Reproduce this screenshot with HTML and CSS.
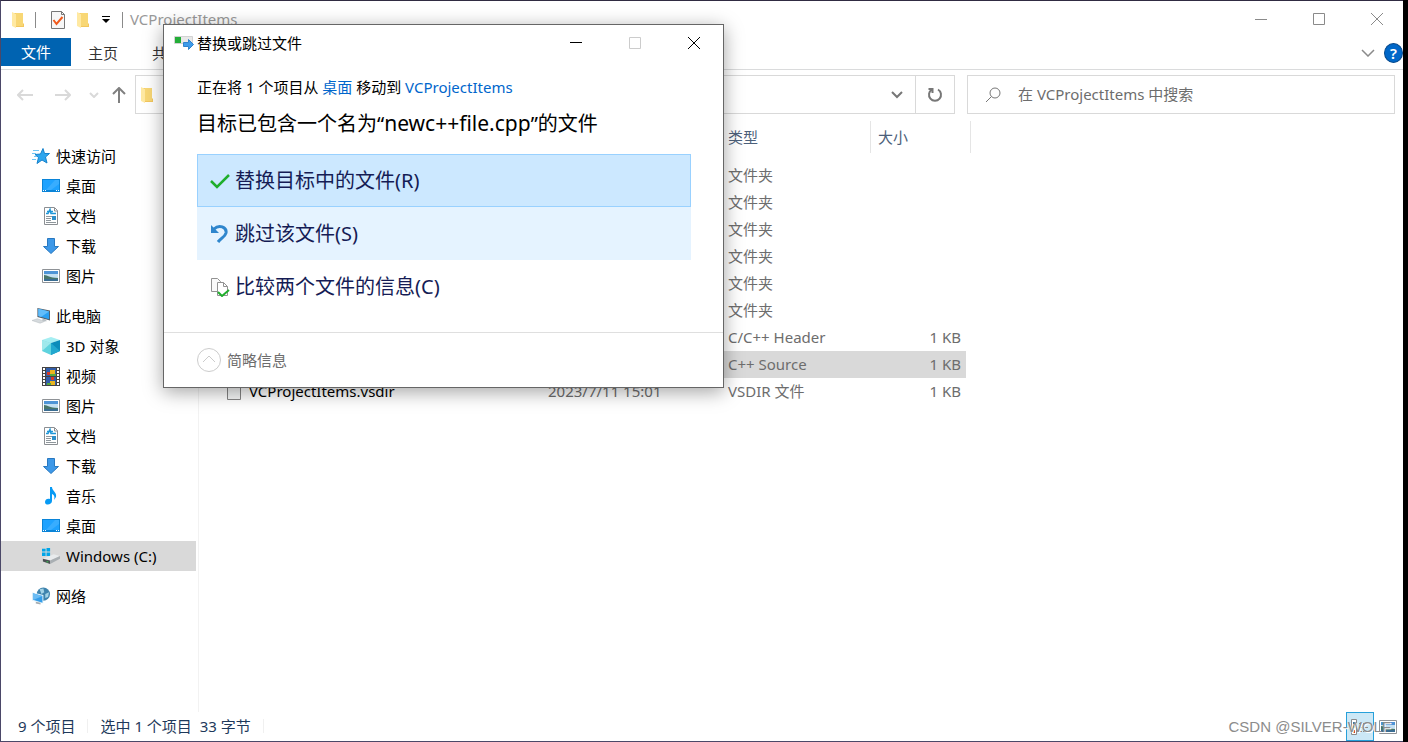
FILE: index.html
```html
<!DOCTYPE html>
<html lang="zh-CN">
<head>
<meta charset="utf-8">
<title>VCProjectItems</title>
<link rel="stylesheet" href="styles.css">
</head>
<body>
<svg class="sprite" aria-hidden="true">
  <symbol id="folder" viewBox="0 0 14 18"><path fill="#f3c75d" d="M3 2h9v10l1 1v3H3z"/><path fill="#f8d775" d="M5 2h7v13H5z"/><path fill="#ffe9a2" d="M1 1l4 2v14l-4-2z"/></symbol>
  <symbol id="desktop" viewBox="0 0 18 14"><path fill="#0a84d8" d="M0 0h18v13H0z"/><path fill="#1ea2ff" d="M1 1h16v10H1z"/><path fill="#38adff" d="M13 1h4v4l-8 6H4z"/><path fill="#fff" d="M1 11h1v1H1zM3 11h1v1H3zM14 11h1v1h-1zM16 11h1v1h-1z"/></symbol>
  <symbol id="doc" viewBox="0 0 16 18"><path fill="#fff" stroke="#8b8f93" d="M1.500.5h10l3 3v14h-13z"/><path fill="none" stroke="#8b8f93" d="M11.500 1v3h3"/><path fill="none" stroke="#1e96d8" stroke-width="1.500" d="M3 6.500h2l2-4 1 4h5M4 4.500h6"/><path stroke="#8f979c" d="M3 9.500h10M3 11.500h5M3 13.500h5M3 15.500h10"/><path fill="#2d8fc9" d="M9 9h4v4H9z"/></symbol>
  <symbol id="down" viewBox="0 0 18 18"><path fill="#3d98e8" stroke="#2878c0" d="M5.500 1.500h7v8h4L9 16.500 1.500 9.500h4z"/></symbol>
  <symbol id="picture" viewBox="0 0 18 14"><path fill="#fff" stroke="#8e9296" d="M.5.5h17v13H.5z"/><path fill="#4e94d6" d="M2 2h14v4H2z"/><path fill="#c4e0f2" d="M2 5h14v4H2z"/><path fill="#47766b" d="M2 6c4 0 5 3 14 3v1H2z"/><path fill="#3a6d92" d="M2 10h14v2H2z"/></symbol>
  <symbol id="star" viewBox="0 0 18 18"><path fill="#2fa6ee" stroke="#1682cc" d="M11 1.500l1.500 5h5l-4 3.500 1.500 6-5-3-5 3.500 1.500-6L3 7.500 8.500 7z"/><path stroke="#71c4f3" d="M1 3.500h6M0 6.500h4M2 9.500h3M0 12.500h4"/></symbol>
  <symbol id="pc" viewBox="0 0 20 18"><path fill="#55606a" d="M6 0l14 3v11L6 10z"/><path fill="#2ba0f2" d="M7 1l12 3v8.500L7 9z"/><path fill="#62bdfa" d="M7 1l12 3-9 6-3-1z"/><path fill="#b9c0c5" d="M12 12l4 1v2l-5-1z"/><path fill="#d5dadd" stroke="#aeb5ba" stroke-width=".5" d="M0 14l6-2 8 3-5 2z"/></symbol>
  <symbol id="cube" viewBox="0 0 18 18"><path fill="#a5eef2" d="M0 3l9-3 9 3-9 3z"/><path fill="#5fd3de" d="M0 3l9 3v12l-9-4z"/><path fill="#a0e9ec" d="M0 3l9 3-9 8z"/><path fill="#0c8cba" d="M18 3L9 6v12l9-4z"/><path fill="#22a8cf" d="M9 6l9 8-9 4z"/></symbol>
  <symbol id="video" viewBox="0 0 18 19"><path fill="#444" d="M0 0h18v19H0z"/><path fill="#335eaa" d="M4 1h10v8H4zM4 10h10v8H4z"/><path stroke="#fff" stroke-width="2" stroke-dasharray="2 1" d="M2 1v17M16 1v17"/><path fill="#e9b51f" d="M8 3h5v4H8zM8 14h5v4H8z"/><path fill="#d93a24" d="M5 5h3v3H5zM9 10h3v3H9z"/><path fill="#54a83e" d="M8 7h6v2H8zM5 16h4v2H5z"/></symbol>
  <symbol id="music" viewBox="0 0 18 18"><path fill="#079af4" d="M8 0h2c0 4 5 5 4 10l-2 3c1-4 0-5-2-6v7c0 4-7 5-7 1 0-3 3-4 5-3z"/></symbol>
  <symbol id="drive" viewBox="0 0 20 18"><path fill="#00a5e8" d="M0 1h4v3H0zM5 0h4v4H5zM0 5h4v4H0zM5 5h4v4H5z"/><path fill="#e8ebed" d="M1 12l12-5 7 2-11 5z"/><path fill="#4b5054" d="M1 12l8 2v4l-8-3z"/><path fill="#a9afb3" d="M9 14l11-5v3L9 18z"/><path fill="#38e051" d="M5 15h2v1H5z"/></symbol>
  <symbol id="network" viewBox="0 0 19 18"><circle cx="12" cy="7" r="7" fill="#3e83ad"/><path fill="#a2d2e6" d="M8 2l4-1 1 4-3 2zM14 7l4-2-1 5-3 1z"/><path fill="#e6f4fa" d="M0 5l12 3v9L0 14z"/><path fill="#349de9" d="M1 6l10 3v7L1 13z"/><path fill="#6bbcf4" d="M1 6l10 3-9 4H1z"/><path fill="#a4acb1" d="M4 15l5 1v2l-5-1z"/></symbol>
</svg>

<main class="explorer">
  <header class="titlebar">
    <svg class="qa-folder" width="14" height="18"><use href="#folder"/></svg>
    <span class="bar"></span>
    <button class="qa-check" aria-label="属性"><svg width="16" height="18" viewBox="0 0 16 18"><path fill="#f7f7f7" stroke="#777" d="M1.500.5h10l3 3v14h-13z"/><path fill="none" stroke="#777" d="M11.500.5v3h3"/><path fill="none" stroke="#f05a1c" stroke-width="2" d="M3.500 9l3 4 6-7"/></svg></button>
    <button class="qa-new" aria-label="新建文件夹"><svg width="14" height="18"><use href="#folder"/></svg></button>
    <button class="qa-menu" aria-label="自定义"><svg width="8" height="8" viewBox="0 0 8 8"><path d="M0 0h8v1H0zM0 3h8L4 7z"/></svg></button>
    <span class="bar bar-title"></span>
    <span class="title">VCProjectItems</span>
    <div class="captions">
      <button aria-label="最小化"><svg width="12" height="12" viewBox="0 0 12 12"><path d="M0 6.500h12"/></svg></button>
      <button aria-label="最大化"><svg width="12" height="12" viewBox="0 0 12 12"><path d="M.5.5h11v11H.5z"/></svg></button>
      <button aria-label="关闭"><svg width="12" height="12" viewBox="0 0 12 12"><path d="M0 0l12 12M12 0L0 12"/></svg></button>
    </div>
  </header>

  <nav class="ribbon">
    <button class="file-tab">文件</button>
    <button class="tab">主页</button>
    <button class="tab">共享</button>
    <button class="expand" aria-label="展开功能区"><svg width="14" height="8" viewBox="0 0 14 8"><path d="M1 1l6 6 6-6"/></svg></button>
    <button class="help" aria-label="帮助">?</button>
  </nav>

  <div class="address-row">
    <div class="history">
      <button aria-label="后退"><svg width="16" height="12" viewBox="0 0 16 12"><path d="M16 6H1M6 1L1 6l5 5"/></svg></button>
      <button aria-label="前进"><svg width="16" height="12" viewBox="0 0 16 12"><path d="M0 6h15M10 1l5 5-5 5"/></svg></button>
      <button aria-label="最近"><svg width="10" height="6" viewBox="0 0 10 6"><path d="M1 1l4 4 4-4"/></svg></button>
      <button class="up" aria-label="向上"><svg width="14" height="16" viewBox="0 0 14 16"><path d="M7 16V1M1 7l6-6 6 6"/></svg></button>
    </div>
    <div class="address">
      <svg class="path-icon" width="14" height="18"><use href="#folder"/></svg>
      <button class="drop" aria-label="历史"><svg width="12" height="8" viewBox="0 0 12 8"><path d="M1 1l5 5 5-5"/></svg></button>
      <button class="refresh" aria-label="刷新"><svg width="16" height="16" viewBox="0 0 16 16"><path d="M11 2.500a6 6 0 1 1-6 0M1.500 2h4v4"/></svg></button>
    </div>
    <label class="search">
      <svg width="16" height="16" viewBox="0 0 16 16"><circle cx="10" cy="6" r="5"/><path d="M6.500 9.500L1 15"/></svg>
      <input type="text" aria-label="搜索" placeholder="在 VCProjectItems 中搜索">
    </label>
  </div>

  <div class="content">
    <aside class="sidebar">
      <div class="group">
        <a class="root" href="#"><svg width="18" height="18"><use href="#star"/></svg>快速访问</a>
        <a href="#"><svg width="18" height="14"><use href="#desktop"/></svg>桌面</a>
        <a href="#"><svg width="18" height="18"><use href="#doc"/></svg>文档</a>
        <a href="#"><svg width="18" height="18"><use href="#down"/></svg>下载</a>
        <a href="#"><svg width="18" height="14"><use href="#picture"/></svg>图片</a>
      </div>
      <div class="group">
        <a class="root" href="#"><svg width="18" height="18"><use href="#pc"/></svg>此电脑</a>
        <a href="#"><svg width="18" height="18"><use href="#cube"/></svg>3D 对象</a>
        <a href="#"><svg width="18" height="19"><use href="#video"/></svg>视频</a>
        <a href="#"><svg width="18" height="14"><use href="#picture"/></svg>图片</a>
        <a href="#"><svg width="18" height="18"><use href="#doc"/></svg>文档</a>
        <a href="#"><svg width="18" height="18"><use href="#down"/></svg>下载</a>
        <a href="#"><svg width="18" height="18"><use href="#music"/></svg>音乐</a>
        <a href="#"><svg width="18" height="14"><use href="#desktop"/></svg>桌面</a>
        <a class="selected" href="#"><svg width="18" height="18"><use href="#drive"/></svg>Windows (C:)</a>
      </div>
      <div class="group">
        <a class="root" href="#"><svg width="18" height="18"><use href="#network"/></svg>网络</a>
      </div>
    </aside>

    <section class="files">
      <table>
        <colgroup><col class="c-name"><col class="c-date"><col class="c-type"><col class="c-size"><col class="c-end"></colgroup>
        <thead><tr><th></th><th></th><th class="type">类型</th><th class="size" colspan="2">大小</th></tr></thead>
        <tbody>
          <tr><td></td><td></td><td>文件夹</td><td></td><td></td></tr>
          <tr><td></td><td></td><td>文件夹</td><td></td><td></td></tr>
          <tr><td></td><td></td><td>文件夹</td><td></td><td></td></tr>
          <tr><td></td><td></td><td>文件夹</td><td></td><td></td></tr>
          <tr><td></td><td></td><td>文件夹</td><td></td><td></td></tr>
          <tr><td></td><td></td><td>文件夹</td><td></td><td></td></tr>
          <tr><td></td><td></td><td>C/C++ Header</td><td class="num">1 KB</td><td></td></tr>
          <tr class="picked"><td></td><td></td><td>C++ Source</td><td class="num">1 KB</td><td></td></tr>
          <tr><td><span class="file"><svg width="16" height="18" viewBox="0 0 16 18"><path fill="#f6f8f8" stroke="#858585" d="M1.500.5h13v17h-13z"/></svg>VCProjectItems.vsdir</span></td><td>2023/7/11 15:01</td><td>VSDIR 文件</td><td class="num">1 KB</td><td></td></tr>
        </tbody>
      </table>
    </section>
  </div>

  <footer class="status">
    <span class="cell">9 个项目</span>
    <span class="cell cell-wide">选中 1 个项目&nbsp; 33 字节</span>
    <div class="views">
      <button class="details" aria-label="详细信息"><svg width="18" height="16" viewBox="0 0 18 16"><path fill="#fff" stroke="#8a8a8a" d="M.5.5h5v15h-5z"/><path fill="#3b78b8" d="M2 3h2v2H2z"/><path fill="#3a9a50" d="M2 7h2v2H2z"/><path fill="#c03a2a" d="M2 11h2v3H2z"/><path stroke="#888" d="M8 4.500h3M12 4.500h5M8 8.500h3M12 8.500h5M8 12.500h3M12 12.500h5"/></svg></button>
      <button class="large" aria-label="大图标"><svg width="18" height="14"><use href="#picture"/></svg></button>
    </div>
    <span class="watermark">CSDN @SILVER-WOLF</span>
  </footer>

  <section class="dialog" role="dialog" aria-label="替换或跳过文件">
    <header class="dialog-title">
      <svg width="20" height="16" viewBox="0 0 20 16"><path fill="#e8e8e8" stroke="#d2d2d2" d="M.5 1.500h18v7H.5z"/><path fill="#23ae38" d="M1 2h6v6H1z"/><path fill="#3e9bea" stroke="#2f82cc" d="M9.500 7.500h5v-3l5 5-5 5v-3h-5z"/></svg>
      <span>替换或跳过文件</span>
      <div class="captions">
        <button aria-label="最小化"><svg width="12" height="12" viewBox="0 0 12 12"><path d="M0 5.500h12"/></svg></button>
        <button class="off" aria-label="最大化" disabled><svg width="12" height="12" viewBox="0 0 12 12"><path d="M.5.5h11v11H.5z"/></svg></button>
        <button aria-label="关闭"><svg width="12" height="12" viewBox="0 0 12 12"><path d="M0 0l12 12M12 0L0 12"/></svg></button>
      </div>
    </header>
    <div class="dialog-body">
      <p class="summary">正在将 1 个项目从 <a href="#">桌面</a> 移动到 <a href="#">VCProjectItems</a></p>
      <h1>目标已包含一个名为“<span class="filename">newc++file.cpp</span>”的文件</h1>
      <div class="commands">
        <button class="focused"><svg width="20" height="20" viewBox="0 0 20 20"><path fill="none" stroke="#1fae2c" stroke-width="2.500" d="M1 10l6 6L19 4"/></svg>替换目标中的文件(R)</button>
        <button class="hover"><svg width="20" height="20" viewBox="0 0 20 20"><path fill="none" stroke="#2f86cd" stroke-width="3" d="M4 5c5-5 13-2 12 4-1 4-5 5-8 9"/><path fill="#2f86cd" d="M1 1v8h8z"/></svg>跳过该文件(S)</button>
        <button><svg width="20" height="20" viewBox="0 0 20 20"><path fill="#fafafa" stroke="#929292" d="M1.500 1.500h6l3 3v10h-9z"/><path fill="#fff" stroke="#929292" d="M7.500 5.500h6l4 4v9h-10zM13.500 5.500v4h4"/><path fill="none" stroke="#1fae2c" stroke-width="2" d="M8 15l4 4 7-6"/></svg>比较两个文件的信息(C)</button>
      </div>
    </div>
    <footer class="dialog-foot">
      <button><svg width="24" height="24" viewBox="0 0 24 24"><circle cx="12" cy="12" r="11.500"/><path d="M6 14l6-6 6 6"/></svg>简略信息</button>
    </footer>
  </section>
</main>
</body>
</html>
```
FILE: styles.css
```css
* { box-sizing: border-box; }

body {
  margin: 0;
  min-height: 100vh;
  display: flex;
  background: #000;
  font: 15px/20px "Noto Sans", "Noto Sans CJK SC", sans-serif;
  color: #000;
}

button, input { font: inherit; color: inherit; }
button { display: flex; align-items: center; justify-content: center; padding: 0; border: 0; background: none; white-space: nowrap; }
a { text-decoration: none; color: inherit; }
svg { flex: none; }
.sprite { position: absolute; width: 0; height: 0; }

.explorer {
  position: relative;
  flex: 1;
  margin-right: 5px;
  display: flex;
  flex-direction: column;
  background: #fff;
  border: 1px solid #4b4868;
  border-top-color: #302b42;
  border-right: 0;
}

/* Title bar */
.titlebar { display: flex; align-items: center; height: 37px; padding-left: 10px; }
.bar { width: 1px; height: 16px; margin-left: 10px; background: #8a8a8a; }
.qa-check { margin-left: 14px; }
.qa-new { margin-left: 10px; }
.qa-menu { margin-left: 12px; }
.bar-title { margin-left: 12px; }
.title { margin-left: 7px; padding-bottom: 2px; color: #999; }
.captions { display: flex; margin-left: auto; align-self: stretch; }
.captions svg { fill: none; stroke: #8a8a8a; }
.titlebar .captions { gap: 6px; padding-bottom: 2px; }
.titlebar .captions button { width: 52px; }

/* Ribbon */
.ribbon { display: flex; height: 32px; border-bottom: 1px solid #dadbdc; align-items: flex-start; }
.ribbon button { height: 28px; }
.file-tab { width: 70px; background: #0063b1; color: #fff; }
.tab { width: 64px; color: #333; }
.ribbon .tab { height: 30px; }
.ribbon .expand { margin-left: auto; height: 30px; }
.expand svg { fill: none; stroke: #8a8a8a; stroke-width: 1.500; }
.ribbon .help { width: 19px; height: 20px; margin: 5px 0 0 9px; border-radius: 50%; background: #0067c8; border: 1px solid #084a8c; color: #fff; font-weight: 600; }

/* Address row */
.address-row { display: flex; height: 44px; padding: 5px 8px 0 0; }
.history { width: 134px; display: flex; align-items: center; padding-left: 16px; }
.history svg { fill: none; stroke: #d9d9d9; stroke-width: 2; }
.history button { margin-right: 22px; }
.history button:nth-child(2) { margin-right: 18px; }
.history button:nth-child(3) { margin-right: 13px; }
.history .up { margin-right: 0; }
.history .up svg { stroke: #808080; }
.address { flex: 1; display: flex; align-items: center; border: 1px solid #d9d9d9; }
.path-icon { margin-left: 4px; }
.address button { align-self: stretch; width: 36px; }
.address .drop { margin-left: auto; }
.address .refresh { width: 39px; border-left: 1px solid #d9d9d9; }
.address button svg { fill: none; stroke: #777; stroke-width: 2; }
.search { width: 428px; margin-left: 12px; display: flex; align-items: center; border: 1px solid #d9d9d9; padding-left: 17px; }
.search svg { fill: none; stroke: #777; }
.search input { flex: 1; min-width: 0; margin-left: 17px; padding: 0 0 2px; border: 0; outline: 0; }
.search input::placeholder { color: #6d6d6d; opacity: 1; }

/* Navigation pane */
.content { flex: 1; display: flex; }
.sidebar { width: 198px; padding: 27px 2px 0 0; border-right: 1px solid #f2f2f2; display: flex; flex-direction: column; gap: 10px; }
.group a { display: flex; align-items: center; gap: 6px; height: 30px; padding-left: 41px; }
.group .root { padding-left: 31px; }
.group .selected { background: #d9d9d9; }

/* File list */
.files { flex: 1; padding: 7px 0 0 22px; }
table { table-layout: fixed; width: 750px; border-collapse: separate; border-spacing: 0; color: #6d6d6d; }
.c-name { width: 327px; }
.c-date { width: 180px; }
.c-type { width: 143px; }
.c-size { width: 95px; }
.c-end { width: 5px; }
th { height: 32px; padding: 0; font-weight: 400; text-align: left; color: #4c607a; }
.type, .size { border-right: 1px solid #e5e5e5; }
.size { padding-left: 7px; }
tbody::before { content: ""; display: block; height: 9px; }
td { height: 27px; padding: 0 0 2px; }
.num { text-align: right; padding-right: 5px; }
.picked td:not(:last-child) { background: #d9d9d9; }
.file { display: flex; align-items: center; gap: 7px; padding-left: 5px; color: #000; }

/* Status bar */
.status { position: relative; display: flex; align-items: center; height: 29px; padding-left: 17px; color: #1e395b; }
.cell { padding-right: 12px; margin-bottom: 2px; border-right: 1px solid #f0f0f0; line-height: 14px; }
.cell-wide { padding-left: 12px; }
.views { display: flex; margin-left: auto; padding-right: 6px; gap: 5px; }
.views .details { width: 28px; height: 29px; border: 1px solid #26a0da; background: #cce8f6; }
.watermark { position: absolute; right: 12px; bottom: 4px; font: 15px/20px "Liberation Sans", sans-serif; color: #8c8c8c; text-shadow: 1px 1px 0 #fff; }

/* Replace-or-skip dialog */
.dialog {
  position: absolute;
  left: 162px;
  top: 23px;
  width: 561px;
  background: #fff;
  border: 1px solid #666;
  box-shadow: 0 4px 18px rgba(0, 0, 0, .36);
}
.dialog-title { display: flex; align-items: center; height: 36px; padding-left: 10px; gap: 3px; }
.dialog-title span { padding-bottom: 1px; }
.dialog-title .captions button { width: 59px; }
.dialog-title .captions svg { stroke: #000; }
.dialog-title .captions .off svg { stroke: #ccc; }
.dialog-body { padding: 16px 32px 19px 33px; }
.summary { margin: 0; }
.summary a { color: #0066cc; }
h1 { margin: 12px 0 16px; font-size: 20px; line-height: 28px; font-weight: 400; white-space: nowrap; }
.filename { font-size: 21px; }
.commands button { width: 100%; height: 53px; justify-content: flex-start; gap: 5px; padding-left: 12px; border: 1px solid transparent; font-size: 20px; line-height: 28px; color: #151c55; }
.commands .focused { background: #cce8ff; border-color: #99d1ff; }
.commands .hover { background: #e5f3ff; }
.dialog-foot { height: 55px; border-top: 1px solid #dfdfdf; padding: 15px 0 0 33px; }
.dialog-foot button { gap: 6px; color: #6d6d6d; }
.dialog-foot svg { fill: none; stroke: #ccc; }
```
